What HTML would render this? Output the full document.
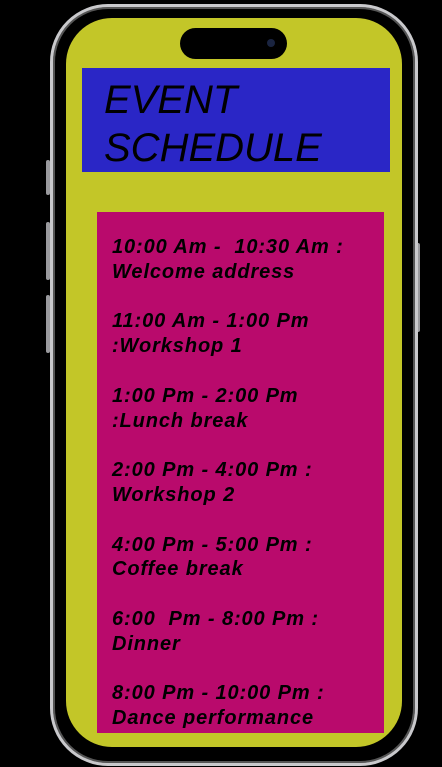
<!DOCTYPE html>
<html><head><style>
body{margin:0;width:442px;height:767px;background:#000;position:relative;overflow:hidden;font-family:"Liberation Sans",sans-serif}
.frame{position:absolute;left:50px;top:4px;width:362px;height:756px;border:3px solid #c9c9cc;border-radius:58px;background:#000;box-shadow:inset 0 0 0 2px #555}
.screen{position:absolute;left:66px;top:18px;width:336px;height:729px;background:#c3c628;border-radius:46px;overflow:hidden}
.island{position:absolute;left:180px;top:28px;width:107px;height:31px;background:#000;border-radius:16px}
.cam{position:absolute;left:267px;top:39px;width:8px;height:8px;border-radius:50%;background:#1a2440}
.btn{position:absolute;background:#9a9a9e;border-radius:2px}
.title{position:absolute;left:82px;top:68px;width:308px;height:104px;background:#2a26c6}
.title div{position:absolute;left:22px;top:8px;font-size:40px;font-style:italic;line-height:48px;color:#000}
.list{position:absolute;left:97px;top:212px;width:287px;height:521px;background:#b90a6c}
.list div{position:absolute;left:15px;top:23px;font-size:20px;font-weight:bold;font-style:italic;line-height:24.8px;letter-spacing:0.9px;color:#000;white-space:pre}
</style></head><body>
<div class="btn" style="left:46px;top:160px;width:4px;height:35px"></div>
<div class="btn" style="left:46px;top:222px;width:4px;height:58px"></div>
<div class="btn" style="left:46px;top:295px;width:4px;height:58px"></div>
<div class="btn" style="left:416px;top:243px;width:4px;height:89px"></div>
<div class="frame"></div>
<div class="screen"></div>
<div class="island"></div><div class="cam"></div>
<div class="title"><div>EVENT<br>SCHEDULE</div></div>
<div class="list"><div>10:00 Am -  10:30 Am :
Welcome address

11:00 Am - 1:00 Pm
:Workshop 1

1:00 Pm - 2:00 Pm
:Lunch break

2:00 Pm - 4:00 Pm :
Workshop 2

4:00 Pm - 5:00 Pm :
Coffee break

6:00  Pm - 8:00 Pm :
Dinner

8:00 Pm - 10:00 Pm :
Dance performance</div></div>
</body></html>
